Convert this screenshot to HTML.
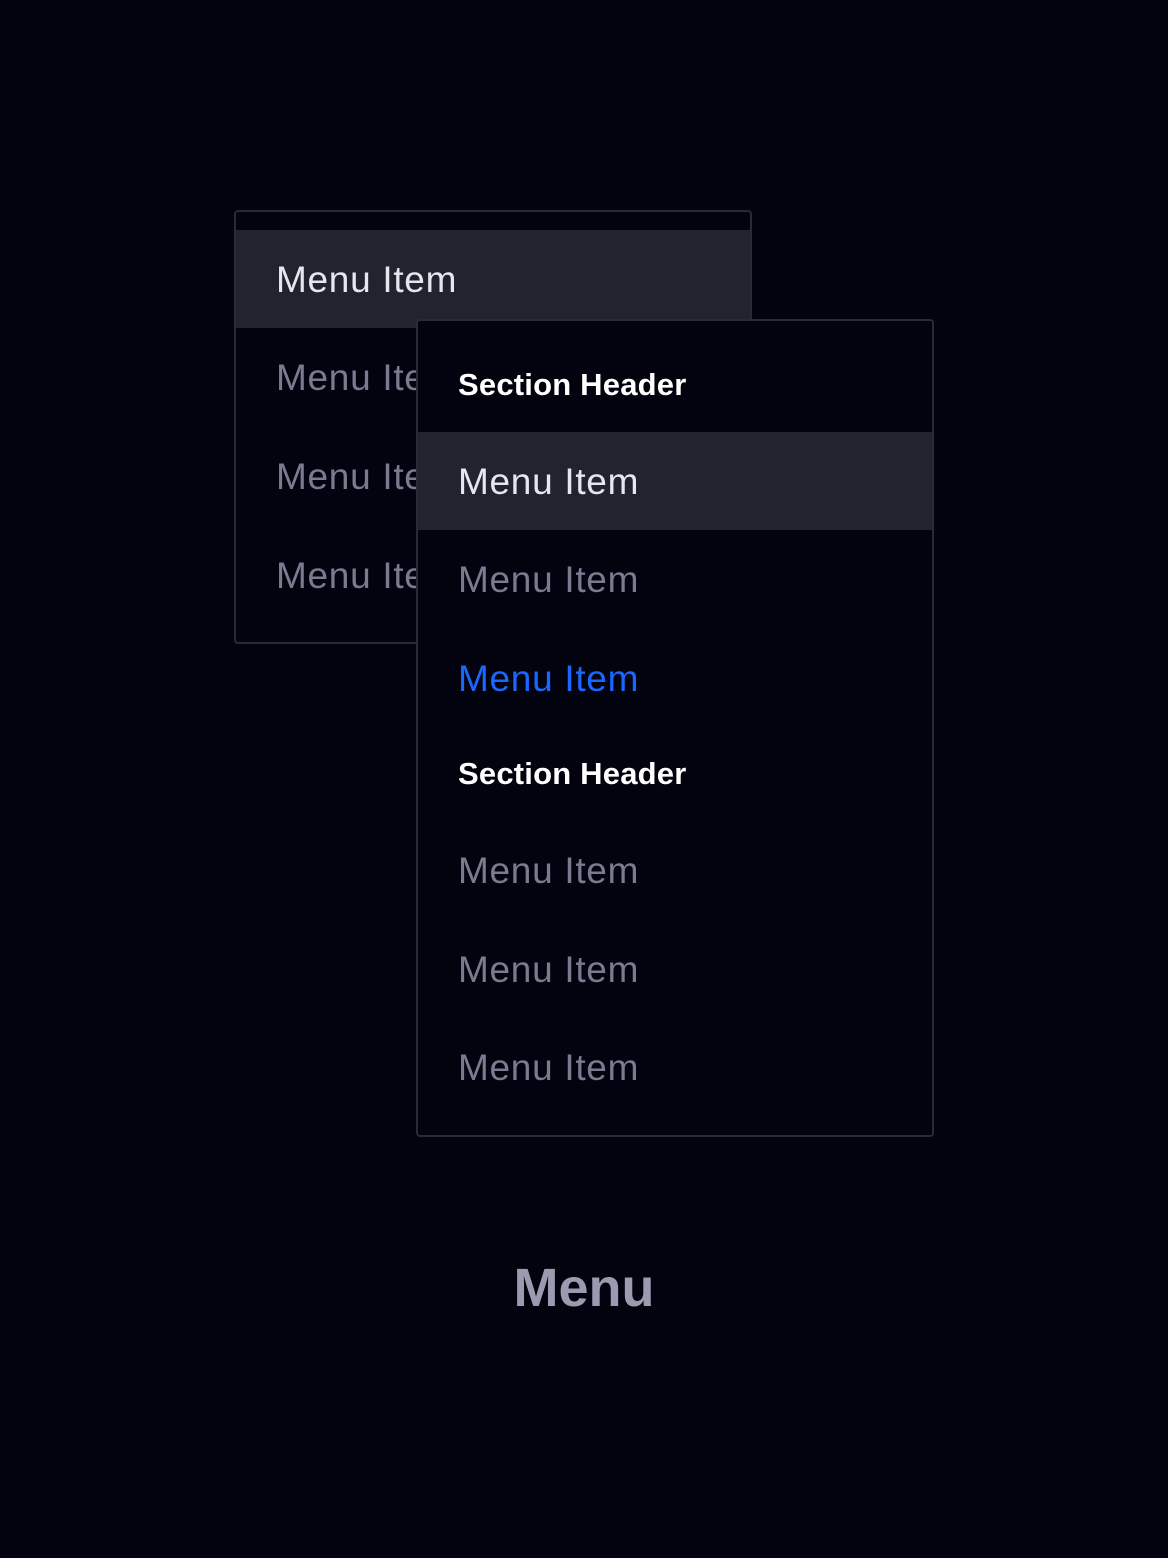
<!DOCTYPE html>
<html><head><meta charset="utf-8"><style>
*{margin:0;padding:0;box-sizing:border-box}
body{width:1168px;height:1558px;background:#03030f;position:relative;overflow:hidden;font-family:"Liberation Sans",sans-serif}
.menu{position:absolute;background:#03030f;border:2px solid #2a2a37;border-radius:4px;overflow:hidden}
.t{position:absolute;left:40px;white-space:nowrap;font-size:37px;line-height:40px;color:#7b7a90;letter-spacing:0.7px}
.hl{position:absolute;left:0;right:0;height:98px;background:#23222f}
.w{color:#e6e6ee}
.b{color:#1a66ff}
.h{font-size:31px;font-weight:bold;color:#fff;letter-spacing:0.2px}
</style></head><body>
<div class="menu" style="left:234px;top:210px;width:518px;height:434px">
  <div class="hl" style="top:18px"></div>
  <div class="t w" style="top:48px">Menu Item</div>
  <div class="t" style="top:146px">Menu Item</div>
  <div class="t" style="top:245px">Menu Item</div>
  <div class="t" style="top:344px">Menu Item</div>
</div>
<div class="menu" style="left:416px;top:319px;width:518px;height:818px">
  <div class="t h" style="top:44px">Section Header</div>
  <div class="hl" style="top:111px"></div>
  <div class="t w" style="top:141px">Menu Item</div>
  <div class="t" style="top:239px">Menu Item</div>
  <div class="t b" style="top:338px">Menu Item</div>
  <div class="t h" style="top:433px">Section Header</div>
  <div class="t" style="top:530px">Menu Item</div>
  <div class="t" style="top:629px">Menu Item</div>
  <div class="t" style="top:727px">Menu Item</div>
</div>
<div style="position:absolute;left:0;width:1168px;top:1258px;text-align:center;font-size:54px;line-height:60px;font-weight:bold;color:#9b9ab0">Menu</div>
</body></html>
